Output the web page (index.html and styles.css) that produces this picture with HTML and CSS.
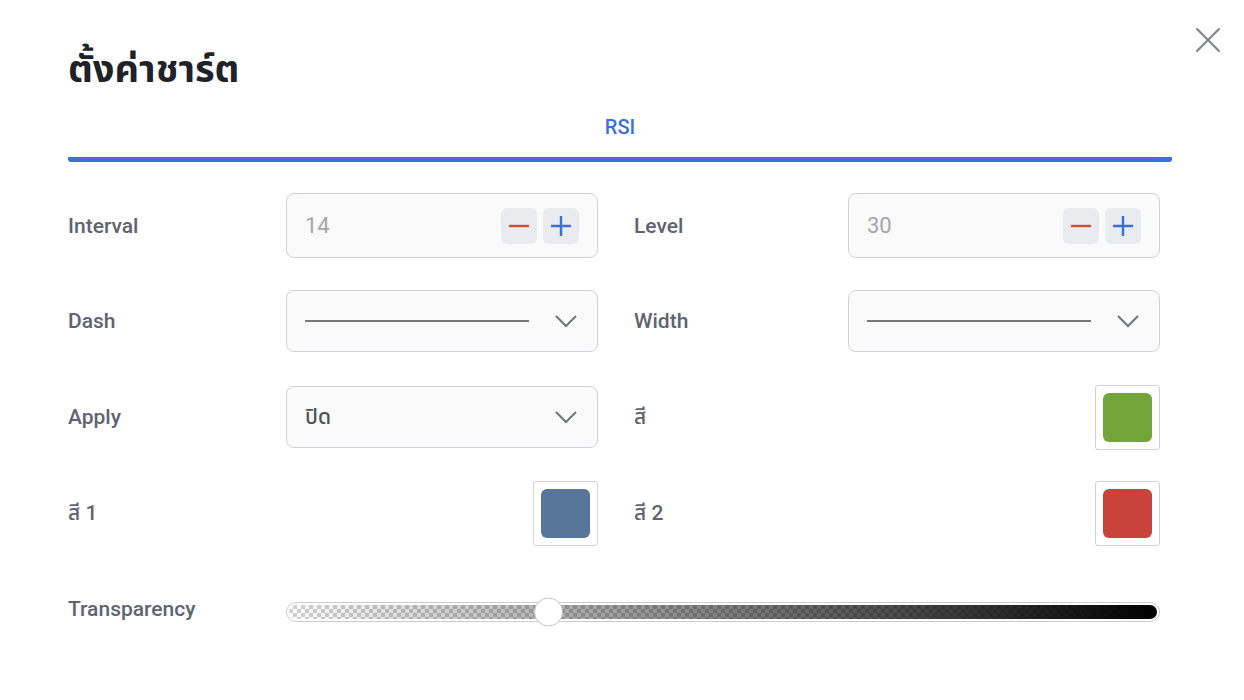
FILE: index.html
```html
<!DOCTYPE html>
<html lang="th">
<head>
    <meta charset="UTF-8">
    <meta name="viewport" content="width=device-width, initial-scale=1.0">
    <title>ตั้งค่าชาร์ต</title>
    <link rel="stylesheet" href="styles.css">
</head>
<body>
    <div class="dialog">
        <!-- Close button -->
        <button class="close-btn" aria-label="close">
            <svg width="26" height="26" viewBox="0 0 26 26">
                <path d="M2 2 L24 24 M24 2 L2 24" stroke="#7b8089" stroke-width="2" fill="none" stroke-linecap="round"/>
            </svg>
        </button>

        <h1 class="title">ตั้งค่าชาร์ต</h1>

        <!-- Tabs -->
        <div class="tabs">
            <div class="tab active">RSI</div>
        </div>

        <!-- Settings form -->
        <div class="form-grid">
            <div class="field">
                <label>Interval</label>
                <div class="number-input">
                    <span class="value">14</span>
                    <div class="steppers">
                        <button class="step minus"><svg width="22" height="22" viewBox="0 0 22 22"><path d="M1 11 H21" stroke="#d2502f" stroke-width="2.4"/></svg></button>
                        <button class="step plus"><svg width="22" height="22" viewBox="0 0 22 22"><path d="M1 11 H21 M11 1 V21" stroke="#3a70d4" stroke-width="2.4"/></svg></button>
                    </div>
                </div>
            </div>
            <div class="field">
                <label>Level</label>
                <div class="number-input">
                    <span class="value">30</span>
                    <div class="steppers">
                        <button class="step minus"><svg width="22" height="22" viewBox="0 0 22 22"><path d="M1 11 H21" stroke="#d2502f" stroke-width="2.4"/></svg></button>
                        <button class="step plus"><svg width="22" height="22" viewBox="0 0 22 22"><path d="M1 11 H21 M11 1 V21" stroke="#3a70d4" stroke-width="2.4"/></svg></button>
                    </div>
                </div>
            </div>

            <div class="field">
                <label>Dash</label>
                <div class="select">
                    <span class="line-preview"></span>
                    <svg class="chevron" width="24" height="14" viewBox="0 0 24 14"><path d="M2 2 L12 12 L22 2" stroke="#6f747d" stroke-width="2" fill="none"/></svg>
                </div>
            </div>
            <div class="field">
                <label>Width</label>
                <div class="select">
                    <span class="line-preview"></span>
                    <svg class="chevron" width="24" height="14" viewBox="0 0 24 14"><path d="M2 2 L12 12 L22 2" stroke="#6f747d" stroke-width="2" fill="none"/></svg>
                </div>
            </div>

            <div class="field">
                <label>Apply</label>
                <div class="select">
                    <span class="select-text">ปิด</span>
                    <svg class="chevron" width="24" height="14" viewBox="0 0 24 14"><path d="M2 2 L12 12 L22 2" stroke="#6f747d" stroke-width="2" fill="none"/></svg>
                </div>
            </div>
            <div class="field">
                <label>สี</label>
                <div class="swatch"><span class="swatch-color green"></span></div>
            </div>

            <div class="field">
                <label>สี 1</label>
                <div class="swatch"><span class="swatch-color blue"></span></div>
            </div>
            <div class="field">
                <label>สี 2</label>
                <div class="swatch"><span class="swatch-color red"></span></div>
            </div>

            <div class="field full">
                <label>Transparency</label>
                <div class="slider">
                    <div class="slider-track"></div>
                    <div class="slider-thumb" style="left: 30%;"></div>
                </div>
            </div>
        </div>
    </div>
</body>
</html>
```

FILE: styles.css
```css
* {
    margin: 0;
    padding: 0;
    box-sizing: border-box;
}

body {
    font-family: 'Roboto', 'Noto Sans Thai', 'Noto Sans', sans-serif;
    background-color: #ffffff;
    color: #1f2227;
}

button {
    font-family: inherit;
    border: none;
    background: none;
    cursor: pointer;
}

/* Dialog */
.dialog {
    position: relative;
    width: 1244px;
    height: 700px;
    padding: 38px 72px 0 68px;
}

.close-btn {
    position: absolute;
    top: 27px;
    right: 23px;
    width: 26px;
    height: 26px;
    display: flex;
}

.title {
    font-size: 38px;
    font-weight: 700;
    line-height: 62px;
    color: #1f2227;
}

/* Tabs */
.tabs {
    margin-top: 6px;
    display: flex;
    justify-content: center;
    border-bottom: 5px solid #3a70d8;
    border-radius: 3px;
}

.tab {
    font-size: 20px;
    font-weight: 500;
    color: #3a70d8;
    line-height: 24px;
    padding: 9px 0 18px;
}

/* Form grid */
.form-grid {
    width: 1092px;
    margin-top: 31px;
    display: grid;
    grid-template-columns: 530px 1fr;
    column-gap: 36px;
    row-gap: 32px;
}

.field {
    display: grid;
    grid-template-columns: 1fr 312px;
    align-items: center;
    height: 64px;
}

.field.full {
    grid-column: 1 / -1;
    grid-template-columns: 218px 1fr;
}

.field label {
    font-size: 21px;
    font-weight: 500;
    color: #5e6470;
}

/* Number input */
.number-input {
    height: 65px;
    border: 1px solid #cfd1d6;
    border-radius: 8px;
    background-color: #fafafa;
    display: flex;
    align-items: center;
    justify-content: space-between;
    padding: 0 18px 0 18px;
}

.number-input .value {
    font-size: 22px;
    color: #a2a6ad;
}

.steppers {
    display: flex;
    gap: 6px;
}

.step {
    width: 36px;
    height: 36px;
    border-radius: 6px;
    background-color: #eaebee;
    display: flex;
    align-items: center;
    justify-content: center;
}

/* Select */
.select {
    height: 62px;
    border: 1px solid #cfd1d6;
    border-radius: 8px;
    background-color: #fafafa;
    display: flex;
    align-items: center;
    padding: 0 19px 0 18px;
}

.line-preview {
    flex: 1;
    height: 2px;
    background-color: #787878;
    margin-right: 25px;
}

.select-text {
    flex: 1;
    font-size: 21px;
    font-weight: 500;
    color: #4d525b;
}

.chevron {
    display: block;
}

/* Color swatch */
.swatch {
    justify-self: end;
    width: 65px;
    height: 65px;
    border: 1px solid #d0d2d6;
    border-radius: 3px;
    padding: 7px;
    background-color: #fff;
}

.swatch-color {
    display: block;
    width: 100%;
    height: 100%;
    border-radius: 6px;
}

.swatch-color.green { background-color: #72a53a; }
.swatch-color.blue { background-color: #58759a; }
.swatch-color.red { background-color: #c9423c; }

/* Slider */
.slider {
    position: relative;
    height: 20px;
    margin-top: 6px;
    border: 1px solid #c9cbcf;
    border-radius: 10px;
    padding: 2px;
    background-color: #fff;
}

.slider-track {
    height: 100%;
    border-radius: 7px;
    background:
        linear-gradient(to right, rgba(0, 0, 0, 0), #000),
        repeating-conic-gradient(#cfcfcf 0 25%, #ffffff 0 50%) 0 0 / 8px 8px;
}

.slider-thumb {
    position: absolute;
    top: 50%;
    width: 29px;
    height: 29px;
    margin-left: -15px;
    transform: translateY(-50%);
    border-radius: 50%;
    background-color: #fff;
    border: 1px solid #c3c5c9;
}
```
